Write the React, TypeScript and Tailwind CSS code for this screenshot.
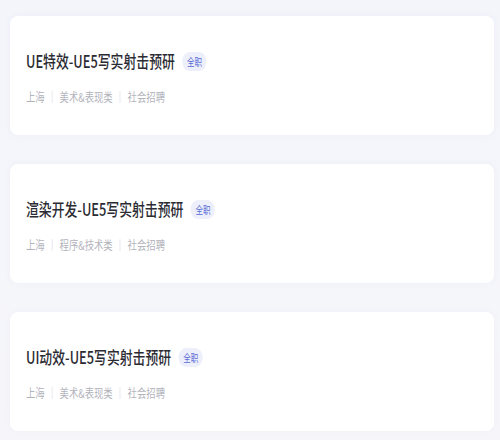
import React from 'react';

interface Job {
    title: string;
    city: string;
    category: string;
    channel: string;
}

const jobs: Job[] = [
    { title: 'UE特效-UE5写实射击预研', city: '上海', category: '美术&表现类', channel: '社会招聘' },
    { title: '渲染开发-UE5写实射击预研', city: '上海', category: '程序&技术类', channel: '社会招聘' },
    { title: 'UI动效-UE5写实射击预研', city: '上海', category: '美术&表现类', channel: '社会招聘' },
];

function JobCard({ job }: { job: Job }) {
    return (
        <div className="h-[119px] w-[484px] rounded-lg bg-white shadow-[0_0_6px_rgba(120,130,180,0.06)] pl-4 pt-[33px]">
            <div className="flex items-center gap-[10px] origin-left scale-x-[0.755]">
                <span className="text-[17px] leading-6 font-medium text-[#2b2b33]">{job.title}</span>
                <span className="h-[19px] px-[6px] rounded-full bg-[#edf0fb] text-[10px] leading-[19px] text-[#5a6bd6]">全职</span>
            </div>
            <div className="mt-[15px] flex items-center text-[12px] leading-[18px] text-[#b3b3bc] origin-left scale-x-[0.78]">
                <span>{job.city}</span>
                <span className="mx-[9px] h-3 w-px bg-[#e3e3ea]" />
                <span>{job.category}</span>
                <span className="mx-[9px] h-3 w-px bg-[#e3e3ea]" />
                <span>{job.channel}</span>
            </div>
        </div>
    );
}

export default function App() {
    return (
        <div
            className="w-[500px] h-[440px] overflow-hidden bg-gradient-to-b from-[#f4f5fb] to-[#f6f6fa] pl-[10px] pt-4 flex flex-col gap-[29px]"
            style={{ fontFamily: '"Noto Sans CJK SC", "Noto Sans", sans-serif' }}
        >
            {jobs.map((job) => (
                <JobCard key={job.title} job={job} />
            ))}
        </div>
    );
}
